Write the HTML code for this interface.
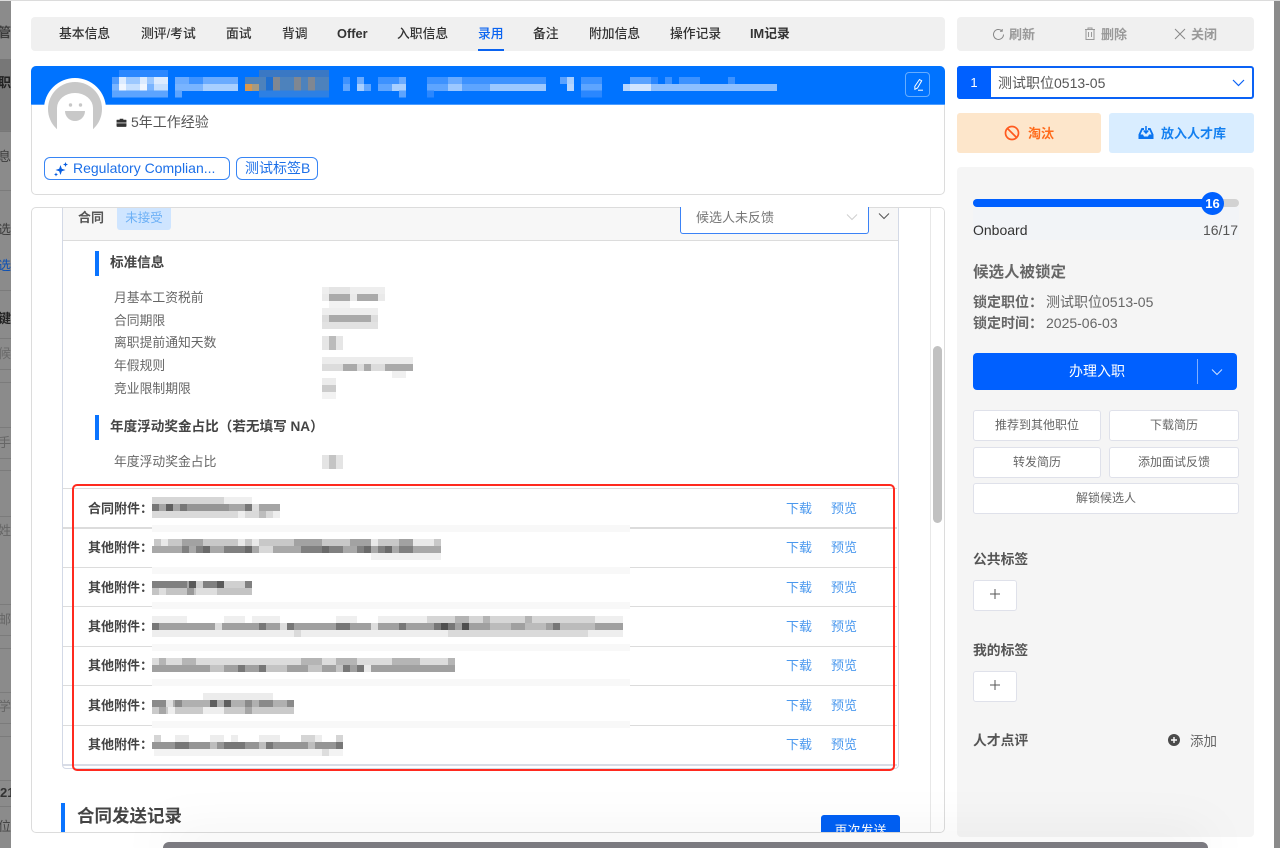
<!DOCTYPE html>
<html lang="zh"><head><meta charset="utf-8"><title>录用</title>
<style>
*{box-sizing:border-box}
html{margin:0;padding:0;width:1280px;height:848px;overflow:hidden}
body{margin:0;padding:0;width:1280px;height:848px;position:relative;overflow:hidden;background:#fff;font-family:"Liberation Sans","Noto Sans CJK SC",sans-serif;color:#555}
div,span,svg{position:absolute}
.t{white-space:nowrap;line-height:20px;height:20px;font-size:13px;margin-top:1px}
.z{margin-top:0}
.tab{font-weight:500;color:#333;top:23px;font-size:12.8px}
.b{font-weight:700}
.row{left:114px;color:#666;font-size:12.8px}
.lb{left:88px;font-weight:700;color:#444}
.dl{left:786px;color:#4a98ee}
.pv{left:831px;color:#4a98ee}
.ln{left:63px;width:834px;height:1px;background:#dcdcdc}
.btn{background:#fff;border:1px solid #dfe1ea;border-radius:3px;font-size:12px;color:#666;text-align:center;line-height:29px;height:31px}
.s{left:0;width:11px;font-size:13px;line-height:20px;color:#3d3d3d;overflow:hidden;white-space:nowrap}
.h{left:0;width:11px;height:1px;background:#7b7b7b}
.band{left:152px;width:478px;background:#f8f8f8}
</style></head><body>

<!-- backdrop strips -->
<div style="left:0;top:0;width:1280px;height:1px;background:#dcdcdc"></div>
<div style="left:0;top:1px;width:11px;height:847px;background:#8b8b8b"></div>
<div style="left:1274px;top:1px;width:6px;height:847px;background:#8b8b8b"></div>
<div style="left:0;top:59px;width:11px;height:73px;background:#777"></div>
<div class="s" style="top:23px;direction:rtl;font-weight:700">管</div>
<div class="s" style="top:73px;direction:rtl;font-weight:700;color:#222">职</div>
<div class="s" style="top:147px;direction:rtl">息</div>
<div class="s" style="top:220px;direction:rtl">选</div>
<div class="s" style="top:256px;direction:rtl;color:#0b4fb3">选</div>
<div class="s" style="top:309px;direction:rtl;font-weight:700;color:#222">键</div>
<div class="s" style="top:344px;direction:rtl;color:#6b6b6b">候</div>
<div class="s" style="top:433px;direction:rtl;color:#666">手</div>
<div class="s" style="top:521px;direction:rtl;color:#666">姓</div>
<div class="s" style="top:610px;direction:rtl;color:#666">邮</div>
<div class="s" style="top:697px;direction:rtl;color:#666">学</div>
<div class="s" style="top:783px;color:#333;font-weight:700">21</div>
<div class="s" style="top:817px;direction:rtl;color:#444">位</div>
<div class="h" style="top:130px"></div><div class="h" style="top:190px"></div><div class="h" style="top:290px"></div><div class="h" style="top:338px"></div><div class="h" style="top:369px"></div><div class="h" style="top:382px"></div><div class="h" style="top:427px"></div><div class="h" style="top:458px"></div><div class="h" style="top:470px"></div><div class="h" style="top:516px"></div><div class="h" style="top:604px"></div><div class="h" style="top:635px"></div><div class="h" style="top:648px"></div><div class="h" style="top:692px"></div><div class="h" style="top:723px"></div><div class="h" style="top:736px"></div><div class="h" style="top:780px"></div><div class="h" style="top:806px"></div>

<!-- tabs -->
<div style="left:31px;top:17px;width:914px;height:34px;background:#f0f0f0;border-radius:4px"></div>
<span class="t tab" style="left:59px">基本信息</span>
<span class="t tab" style="left:141px">测评/考试</span>
<span class="t tab" style="left:226px">面试</span>
<span class="t tab" style="left:282px">背调</span>
<span class="t tab" style="left:337px;font-weight:700">Offer</span>
<span class="t tab" style="left:397px">入职信息</span>
<span class="t tab" style="left:478px;color:#0a63f0">录用</span>
<div style="left:478px;top:49px;width:26px;height:2px;background:#0a63f0"></div>
<span class="t tab" style="left:533px">备注</span>
<span class="t tab" style="left:589px">附加信息</span>
<span class="t tab" style="left:670px">操作记录</span>
<span class="t tab" style="left:750px;font-weight:700">IM记录</span>

<!-- header card -->
<div style="left:31px;top:66px;width:914px;height:129px;background:#fff;border:1px solid #dcdcdc;border-radius:5px"></div>
<div style="left:31px;top:66px;width:914px;height:39px;background:#0073ff;border-radius:5px 5px 0 0;border-bottom:1px solid #4d9dff"></div>
<svg style="left:100px;top:66px" width="700" height="39" viewBox="100 66 700 39" fill="none" stroke-width="7" shape-rendering="crispEdges">
<path stroke="#2a87ff" d="M119 73.500h49"/>
<path stroke="#3a78c4" d="M259 73.500h70"/>
<path stroke="#4d9bff" d="M112 80.500h7"/>
<path stroke="#dcebff" d="M119 80.500h7M140 80.500h7M154 80.500h14"/>
<path stroke="#9cc8ff" d="M126 80.500h14M147 80.500h7"/>
<path stroke="#6aabff" d="M175 80.500h14M203 80.500h35M357 80.500h7M399 80.500h7"/>
<path stroke="#3d92ff" d="M189 80.500h14M343 80.500h7M378 80.500h21M427 80.500h21M462 80.500h84M581 80.500h21M665 80.500h7M679 80.500h21M728 80.500h7"/>
<path stroke="#6aabff" d="M448 80.500h14"/>
<path stroke="#a8cfff" d="M567 80.500h7"/>
<path stroke="#5aa2ff" d="M560 80.500h7M630 80.500h21"/>
<path stroke="#2a87ff" d="M651 80.500h7"/>
<path stroke="#4d82bc" d="M245 80.500h14M259 80.500h70"/>
<path stroke="#1f6fd0" d="M266 80.500h7"/>
<path stroke="#808791" d="M273 80.500h7M294 80.500h7M308 80.500h7"/>
<path stroke="#f0f6ff" d="M119 87.500h7M140 87.500h7"/>
<path stroke="#c5dfff" d="M126 87.500h14M154 87.500h14"/>
<path stroke="#79b4ff" d="M112 87.500h7M147 87.500h7M175 87.500h28"/>
<path stroke="#a8cfff" d="M203 87.500h35M357 87.500h7M392 87.500h14"/>
<path stroke="#5ea5ff" d="M343 87.500h7M364 87.500h7M378 87.500h14M427 87.500h21M462 87.500h28M581 87.500h21"/>
<path stroke="#9cc8ff" d="M490 87.500h56M448 87.500h14"/>
<path stroke="#b6d6ff" d="M567 87.500h7M623 87.500h7"/>
<path stroke="#d2e5ff" d="M630 87.500h21"/>
<path stroke="#8dbfff" d="M651 87.500h126"/>
<path stroke="#d8984e" d="M245 87.500h7"/>
<path stroke="#a69a82" d="M252 87.500h7"/>
<path stroke="#4d82bc" d="M259 87.500h70"/>
<path stroke="#1f6fd0" d="M266 87.500h7"/>
<path stroke="#808791" d="M273 87.500h7M294 87.500h7M308 87.500h7"/>
<path stroke="#5ca4ff" d="M112 94h56M175 94h7M399 94h7"/>
<path stroke="#2d80e4" d="M259 94h70"/>
<path stroke="#2a87ff" d="M427 94h7M581 94h21"/>
</svg>
<!-- edit -->
<div style="left:905px;top:72px;width:25px;height:25px;border:1px solid #66adff;border-radius:4px"></div>
<svg style="left:905px;top:72px" width="25" height="25" viewBox="0 0 25 25" fill="none" stroke="#fff" stroke-width="1"><path d="M14.500 7.500l2.200 1.300-4.200 7.200-2.600 1.300-.1-2.900z"/><path d="M13 18.200h5"/></svg>
<!-- avatar -->
<svg style="left:44px;top:78px" width="62" height="52" viewBox="0 0 62 52">
<circle cx="31" cy="31" r="31" fill="#fff"/>
<circle cx="31" cy="31" r="27" fill="#c8c8c8"/>
<path d="M13 52V30a18 15 0 0 1 36 0v22z" fill="#fff"/>
<circle cx="26.500" cy="27" r="1.700" fill="#c8c8c8"/><circle cx="36.500" cy="27" r="1.700" fill="#c8c8c8"/>
<path d="M21 33h20a10 10 0 0 1-20 0z" fill="#c8c8c8"/>
</svg>
<svg style="left:116px;top:118px" width="11" height="9" viewBox="0 0 11 10"><path d="M3.500 2V.8h4V2H10.500a.5.5 0 0 1 .5.500V9a.8.8 0 0 1-.8.8H.8A.8.8 0 0 1 0 9V2.500A.5.5 0 0 1 .5 2z" fill="#333"/><path d="M0 5.500h11" stroke="#fff" stroke-width=".8"/></svg>
<span class="t z" style="left:131px;top:112px;font-size:14px;color:#555">5年工作经验</span>
<div style="left:44px;top:157px;width:186px;height:23px;border:1px solid #3785f5;border-radius:6px"></div>
<svg style="left:53px;top:161px" width="16" height="16" viewBox="0 0 16 16" fill="#0a5fe0"><path d="M7.500 4l1.300 3.700L12.500 9 8.800 10.300 7.500 14 6.200 10.300 2.500 9 6.200 7.700z"/><path d="M12.500 1l.7 1.800 1.800.7-1.800.7-.7 1.800-.7-1.800-1.800-.7 1.800-.7z"/><path d="M3 11.500l.6 1.400 1.400.6-1.400.6L3 15.500l-.6-1.400L1 13.500l1.400-.6z"/></svg>
<span class="t z" style="left:73px;top:158px;font-size:14px;color:#1c6fe8">Regulatory Complian...</span>
<div style="left:236px;top:157px;width:82px;height:23px;border:1px solid #3785f5;border-radius:6px"></div>
<span class="t z" style="left:245px;top:158px;font-size:14px;color:#1c6fe8">测试标签B</span>

<!-- content card -->
<div style="left:31px;top:207px;width:914px;height:626px;background:#fff;border:1px solid #dcdcdc;border-radius:5px;overflow:hidden">
  <div style="left:898px;top:0;width:15px;height:626px;border-left:1px solid #e8e8e8;background:#fff"></div>
  <div style="left:901px;top:138px;width:9px;height:177px;background:#c1c1c1;border-radius:5px"></div>
</div>
<!-- inner card -->
<div style="left:62px;top:208px;width:837px;height:561px;border:1px solid #d3d9e6;border-top:0;border-radius:0 0 4px 4px;background:#fff"></div>
<div style="left:63px;top:208px;width:835px;height:33px;background:#f7f7f7;border-bottom:1px solid #dcdcdc"></div>
<span class="t b" style="left:78px;top:207px;font-size:13px;color:#555">合同</span>
<div style="left:117px;top:208px;width:54px;height:22px;background:#cfe5ff;border-radius:0 0 3px 3px;font-size:12.500px;color:#6cb0f6;text-align:center;line-height:20px">未接受</div>
<div style="left:680px;top:207px;width:189px;height:27px;background:#fff;border:1px solid #3b82f6;border-top:0;border-radius:0 0 3px 3px"></div>
<span class="t" style="left:696px;top:207px;color:#777">候选人未反馈</span>
<svg style="left:846px;top:213px" width="12" height="8" fill="none" stroke="#cfcfcf"><path d="M1 1.500l5 5 5-5"/></svg>
<svg style="left:878px;top:212px" width="12" height="8" fill="none" stroke="#555"><path d="M1 1.500l5 5 5-5"/></svg>

<div style="left:95px;top:251px;width:4px;height:25px;background:#0a74ff"></div>
<span class="t b" style="left:110px;top:252px;color:#444;font-size:13.600px">标准信息</span>
<span class="t row" style="top:287px">月基本工资税前</span>
<span class="t row" style="top:310px">合同期限</span>
<span class="t row" style="top:332px">离职提前通知天数</span>
<span class="t row" style="top:355px">年假规则</span>
<span class="t row" style="top:378px">竞业限制期限</span>
<div style="left:95px;top:415px;width:4px;height:25px;background:#0a74ff"></div>
<span class="t b" style="left:110px;top:416px;color:#444;font-size:13.600px">年度浮动奖金占比（若无填写 NA）</span>
<span class="t row" style="top:451px">年度浮动奖金占比</span>

<!-- attachment rows -->
<div class="ln" style="top:488px"></div><div class="ln" style="top:527px;height:2px"></div><div class="ln" style="top:567px"></div><div class="ln" style="top:606px"></div><div class="ln" style="top:646px"></div><div class="ln" style="top:685px"></div><div class="ln" style="top:725px"></div><div class="ln" style="top:764px;height:2px;background:#d8dce6"></div>
<div style="left:152px;top:489px;width:478px;height:275px;background:#fff"></div>
<div class="band" style="top:525px;height:7px"></div><div class="band" style="top:567px;height:7px"></div><div class="band" style="top:602px;height:7px"></div><div class="band" style="top:644px;height:7px"></div><div class="band" style="top:679px;height:7px"></div><div class="band" style="top:721px;height:7px"></div>
<span class="t lb" style="top:498px">合同附件：</span>
<span class="t lb" style="top:537px">其他附件：</span>
<span class="t lb" style="top:577px">其他附件：</span>
<span class="t lb" style="top:616px">其他附件：</span>
<span class="t lb" style="top:655px">其他附件：</span>
<span class="t lb" style="top:695px">其他附件：</span>
<span class="t lb" style="top:734px">其他附件：</span>
<span class="t dl" style="top:498px">下载</span><span class="t pv" style="top:498px">预览</span>
<span class="t dl" style="top:537px">下载</span><span class="t pv" style="top:537px">预览</span>
<span class="t dl" style="top:577px">下载</span><span class="t pv" style="top:577px">预览</span>
<span class="t dl" style="top:616px">下载</span><span class="t pv" style="top:616px">预览</span>
<span class="t dl" style="top:655px">下载</span><span class="t pv" style="top:655px">预览</span>
<span class="t dl" style="top:695px">下载</span><span class="t pv" style="top:695px">预览</span>
<span class="t dl" style="top:734px">下载</span><span class="t pv" style="top:734px">预览</span>

<!-- mosaics -->
<svg style="left:0;top:0" width="1280" height="848" viewBox="0 0 1280 848" fill="none" stroke-width="7" shape-rendering="crispEdges">
<!-- standard values -->
<path stroke="#eee" d="M322 290.500h63M322 311.500h56"/>
<path stroke="#e4e4e4" d="M329 290.500h21"/>
<path stroke="#eaeaea" d="M322 297.500h63"/>
<path stroke="#aaa" d="M329 297.500h21M357 297.500h21"/>
<path stroke="#f2f2f2" d="M329 304.500h21"/>
<path stroke="#ddd" d="M322 318.500h56"/><path stroke="#aaa" d="M329 318.500h42"/>
<path stroke="#e2e2e2" d="M322 325.500h56"/>
<path stroke="#e6e6e6" d="M322 339.500h21M322 346.500h21"/>
<path stroke="#bbb" d="M329 339.500h7M329 346.500h7"/>
<path stroke="#ececec" d="M322 360.500h91"/>
<path stroke="#dcdcdc" d="M322 367.500h91"/>
<path stroke="#aaa" d="M343 367.500h14M364 367.500h7M385 367.500h28"/>
<path stroke="#f0f0f0" d="M392 374.500h14"/>
<path stroke="#ececec" d="M322 381.500h14"/><path stroke="#ccc" d="M322 388.500h14"/><path stroke="#f2f2f2" d="M322 395.500h14"/>
<path stroke="#e4e4e4" d="M322 458.500h21M322 465.500h21"/><path stroke="#c4c4c4" d="M329 458.500h7M329 465.500h7"/>

<!-- row1 -->
<path stroke="#d6d6d6" d="M152 500.500h84"/><path stroke="#efefef" d="M224 500.500h28"/>
<path stroke="#a5a5a5" d="M152 507.500h128"/>
<path stroke="#959595" d="M187 507.500h42"/><path stroke="#5f5f5f" d="M166 507.500h7"/><path stroke="#777" d="M152 507.500h7M180 507.500h7M245 507.500h7"/><path stroke="#ddd" d="M252 507.500h7"/>
<path stroke="#dadada" d="M152 514.500h128"/><path stroke="#eee" d="M238 514.500h7M273 514.500h7"/><path stroke="#bdbdbd" d="M259 514.500h7"/>
<!-- row2 -->
<path stroke="#c8c8c8" d="M154 542.500h287"/>
<path stroke="#e9e9e9" d="M161 542.500h7M238 542.500h7M252 542.500h7M371 542.500h7M413 542.500h21"/>
<path stroke="#a2a2a2" d="M182 542.500h21M294 542.500h28M350 542.500h21M399 542.500h14"/>
<path stroke="#a8a8a8" d="M152 549.500h289"/>
<path stroke="#808080" d="M182 549.500h7M196 549.500h14M224 549.500h21M301 549.500h42M357 549.500h7M378 549.500h14M399 549.500h14"/>
<path stroke="#6a6a6a" d="M203 549.500h7M245 549.500h7M322 549.500h7M364 549.500h7M385 549.500h7"/>
<path stroke="#d8d8d8" d="M259 549.500h14"/>
<path stroke="#f0f0f0" d="M371 556.500h70"/>
<!-- row3 -->
<path stroke="#a8a8a8" d="M152 584.500h100"/>
<path stroke="#808080" d="M152 584.500h35M203 584.500h14M245 584.500h7"/><path stroke="#5a5a5a" d="M189 584.500h7M217 584.500h7"/><path stroke="#d0d0d0" d="M196 584.500h7M224 584.500h21"/>
<path stroke="#c4c4c4" d="M152 591.500h100"/><path stroke="#999" d="M187 591.500h7"/><path stroke="#dedede" d="M159 591.500h7M196 591.500h21"/>
<!-- row4 -->
<path stroke="#efefef" d="M152 619.500h35M224 619.500h21M252 619.500h28M336 619.500h21M378 619.500h49M595 619.500h28"/>
<path stroke="#d6d6d6" d="M427 619.500h168"/><path stroke="#b4b4b4" d="M455 619.500h14M483 619.500h7M525 619.500h7"/>
<path stroke="#a0a0a0" d="M152 626.500h471"/>
<path stroke="#ddd" d="M215 626.500h7M280 626.500h7M371 626.500h7"/>
<path stroke="#777" d="M152 626.500h7M259 626.500h7M287 626.500h7M336 626.500h14M399 626.500h7M434 626.500h7M448 626.500h7M553 626.500h7"/>
<path stroke="#4f4f4f" d="M441 626.500h7M462 626.500h7"/>
<path stroke="#bbb" d="M490 626.500h21M525 626.500h21M560 626.500h35"/>
<path stroke="#eeeeee" d="M152 633.500h471"/>
<path stroke="#dadada" d="M448 633.500h140M294 633.500h7"/>
<!-- row5 -->
<path stroke="#dcdcdc" d="M152 661.500h303"/>
<path stroke="#b5b5b5" d="M159 661.500h7M182 661.500h14M301 661.500h21M336 661.500h21M392 661.500h28M448 661.500h7"/>
<path stroke="#a0a0a0" d="M152 668.500h303"/>
<path stroke="#777" d="M238 668.500h7M259 668.500h7M343 668.500h7M357 668.500h7"/>
<path stroke="#c4c4c4" d="M210 668.500h14M266 668.500h21M308 668.500h14M336 668.500h7"/>
<path stroke="#eaeaea" d="M364 668.500h7"/>
<!-- row6 -->
<path stroke="#ececec" d="M203 696.500h70"/>
<path stroke="#b0b0b0" d="M152 703.500h142"/>
<path stroke="#8a8a8a" d="M152 703.500h14M175 703.500h7M245 703.500h7M259 703.500h14M287 703.500h7"/>
<path stroke="#5f5f5f" d="M210 703.500h7M224 703.500h7"/>
<path stroke="#e0e0e0" d="M166 703.500h7"/>
<path stroke="#cacaca" d="M152 710.500h142"/><path stroke="#eee" d="M168 710.500h7M203 710.500h21"/><path stroke="#a6a6a6" d="M159 710.500h7M245 710.500h7"/>
<!-- row7 -->
<path stroke="#d5d5d5" d="M154 738.500h7M301 738.500h14M336 738.500h7"/><path stroke="#ededed" d="M175 738.500h14M210 738.500h14M231 738.500h7M259 738.500h21M315 738.500h7"/>
<path stroke="#959595" d="M152 745.500h191"/>
<path stroke="#777" d="M175 745.500h14M224 745.500h21M266 745.500h7M336 745.500h7"/>
<path stroke="#bdbdbd" d="M210 745.500h7M259 745.500h7M308 745.500h7"/>
<path stroke="#f3f3f3" d="M154 752.500h189"/><path stroke="#ddd" d="M322 752.500h7"/>
</svg>

<!-- red highlight -->
<div style="left:72px;top:484px;width:823px;height:287px;border:2px solid #ff2a1f;border-radius:5px"></div>

<!-- send record (clipped by card) -->
<div style="left:61px;top:803px;width:4px;height:29px;background:#0a74ff"></div>
<span class="t b z" style="left:77px;top:806px;font-size:17.500px;color:#444">合同发送记录</span>
<div style="left:821px;top:815px;width:79px;height:17px;background:#0060f5;border-radius:3px 3px 0 0;overflow:hidden;color:#fff;font-size:13px;text-align:center;line-height:31px">再次发送</div>

<!-- right toolbar -->
<div style="left:957px;top:17px;width:297px;height:34px;background:#f0f0f0;border-radius:4px"></div>
<svg style="left:992px;top:28px" width="13" height="13" viewBox="0 0 13 13" fill="none" stroke="#888"><path d="M11.500 6.500a5 5 0 1 1-1.700-3.800"/><path d="M10.200 1v2.200H8" /></svg>
<span class="t b" style="left:1009px;top:24px;color:#999">刷新</span>
<svg style="left:1084px;top:27px" width="12" height="14" viewBox="0 0 12 14" fill="none" stroke="#999"><path d="M1 2.500h10M4 2.500V1h4v1.500M2 2.500v10h8v-10M4.500 5v5M7.500 5v5"/></svg>
<span class="t b" style="left:1101px;top:24px;color:#999">删除</span>
<svg style="left:1174px;top:28px" width="12" height="12" viewBox="0 0 12 12" fill="none" stroke="#888"><path d="M1 1l10 10M11 1L1 11"/></svg>
<span class="t b" style="left:1191px;top:24px;color:#999">关闭</span>

<!-- select -->
<div style="left:957px;top:66px;width:297px;height:33px;background:#fff;border:2px solid #0a62f5;border-radius:3px"></div>
<div style="left:957px;top:66px;width:34px;height:33px;background:#0060ff;border-radius:3px 0 0 3px;color:#fff;font-size:13px;line-height:33px;text-align:center">1</div>
<span class="t z" style="left:998px;top:73px;font-size:14px;color:#555">测试职位0513-05</span>
<svg style="left:1232px;top:79px" width="13" height="8" fill="none" stroke="#0a62f5" stroke-width="1.200"><path d="M1 1l5.500 5.500L12 1"/></svg>

<!-- actions -->
<div style="left:957px;top:113px;width:144px;height:40px;background:#fde6cb;border-radius:3px"></div>
<svg style="left:1004px;top:125px" width="16" height="16" viewBox="0 0 16 16" fill="none" stroke="#ff5a1f" stroke-width="1.700"><circle cx="8" cy="8" r="6.500"/><path d="M3.500 3.500l9 9"/></svg>
<span class="t b" style="left:1028px;top:123px;color:#ff6a1a">淘汰</span>
<div style="left:1109px;top:113px;width:145px;height:40px;background:#d9edff;border-radius:3px"></div>
<svg style="left:1138px;top:125px" width="16" height="15" viewBox="0 0 16 15"><path d="M3.500 3H6V5H4.600L2.500 9.500H5l1 2h4l1-2h2.500L11.400 5H10V3h2.500L15.500 9.500V14H.5V9.500z" fill="#0a74f0"/><path d="M8 1v6.500M5.700 5.500L8 8l2.300-2.500" stroke="#0a74f0" stroke-width="1.500" fill="none"/></svg>
<span class="t b" style="left:1161px;top:123px;color:#1480f0">放入人才库</span>

<!-- panel -->
<div style="left:957px;top:167px;width:297px;height:670px;background:#f5f5f5;border-radius:4px"></div>
<div style="left:973px;top:207px;width:266px;height:33px;background:#f2f4f7"></div>
<div style="left:973px;top:199px;width:266px;height:8px;background:#d2d2d2;border-radius:4px"></div>
<div style="left:973px;top:199px;width:239px;height:8px;background:#0060ff;border-radius:4px 0 0 4px"></div>
<div style="left:1201px;top:192px;width:23px;height:23px;background:#0060ff;border-radius:50%;color:#fff;font-size:13px;font-weight:700;text-align:center;line-height:23px">16</div>
<span class="t z" style="left:973px;top:220px;font-size:14px;color:#333">Onboard</span>
<span class="t z" style="right:42px;top:220px;font-size:14px;color:#555">16/17</span>

<span class="t b" style="left:973px;top:262px;font-size:15.500px;color:#666">候选人被锁定</span>
<span class="t b" style="left:973px;top:291px;color:#666;font-size:14px">锁定职位：</span>
<span class="t" style="left:1046px;top:291px;color:#666;font-size:14px">测试职位0513-05</span>
<span class="t b" style="left:973px;top:312px;color:#666;font-size:14px">锁定时间：</span>
<span class="t" style="left:1046px;top:312px;color:#666;font-size:14px">2025-06-03</span>

<div style="left:973px;top:353px;width:264px;height:37px;background:#0060ff;border-radius:4px"></div>
<span class="t z" style="left:1069px;top:361px;font-size:14px;color:#fff">办理入职</span>
<div style="left:1197px;top:359px;width:1px;height:25px;background:#80aeff"></div>
<svg style="left:1211px;top:368px" width="12" height="8" fill="none" stroke="#cfe0ff"><path d="M1 1.500l5 5 5-5"/></svg>

<div class="btn" style="left:973px;top:410px;width:128px">推荐到其他职位</div>
<div class="btn" style="left:1109px;top:410px;width:130px">下载简历</div>
<div class="btn" style="left:973px;top:447px;width:128px">转发简历</div>
<div class="btn" style="left:1109px;top:447px;width:130px">添加面试反馈</div>
<div class="btn" style="left:973px;top:483px;width:266px">解锁候选人</div>

<span class="t b" style="left:973px;top:549px;color:#555;font-size:13.800px">公共标签</span>
<div class="btn" style="left:973px;top:580px;width:44px;height:31px"></div>
<svg style="left:989px;top:588px" width="12" height="12" fill="none" stroke="#555"><path d="M6 1v10M1 6h10"/></svg>
<span class="t b" style="left:973px;top:640px;color:#555;font-size:13.800px">我的标签</span>
<div class="btn" style="left:973px;top:671px;width:44px;height:31px"></div>
<svg style="left:989px;top:679px" width="12" height="12" fill="none" stroke="#555"><path d="M6 1v10M1 6h10"/></svg>
<span class="t b" style="left:973px;top:730px;color:#555;font-size:13.800px">人才点评</span>
<svg style="left:1168px;top:734px" width="12" height="12" viewBox="0 0 12 12"><circle cx="6" cy="6" r="6" fill="#4a4a4a"/><path d="M6 3v6M3 6h6" stroke="#fff" stroke-width="1.400"/></svg>
<span class="t" style="left:1190px;top:731px;color:#666;font-size:13.500px">添加</span>

<!-- bottom floating window + shadow -->
<div style="left:163px;top:842px;width:1045px;height:6px;background:#7b7a80;border-radius:12px 12px 0 0;box-shadow:0 0 50px rgba(0,0,0,.27)"></div>
</body></html>
